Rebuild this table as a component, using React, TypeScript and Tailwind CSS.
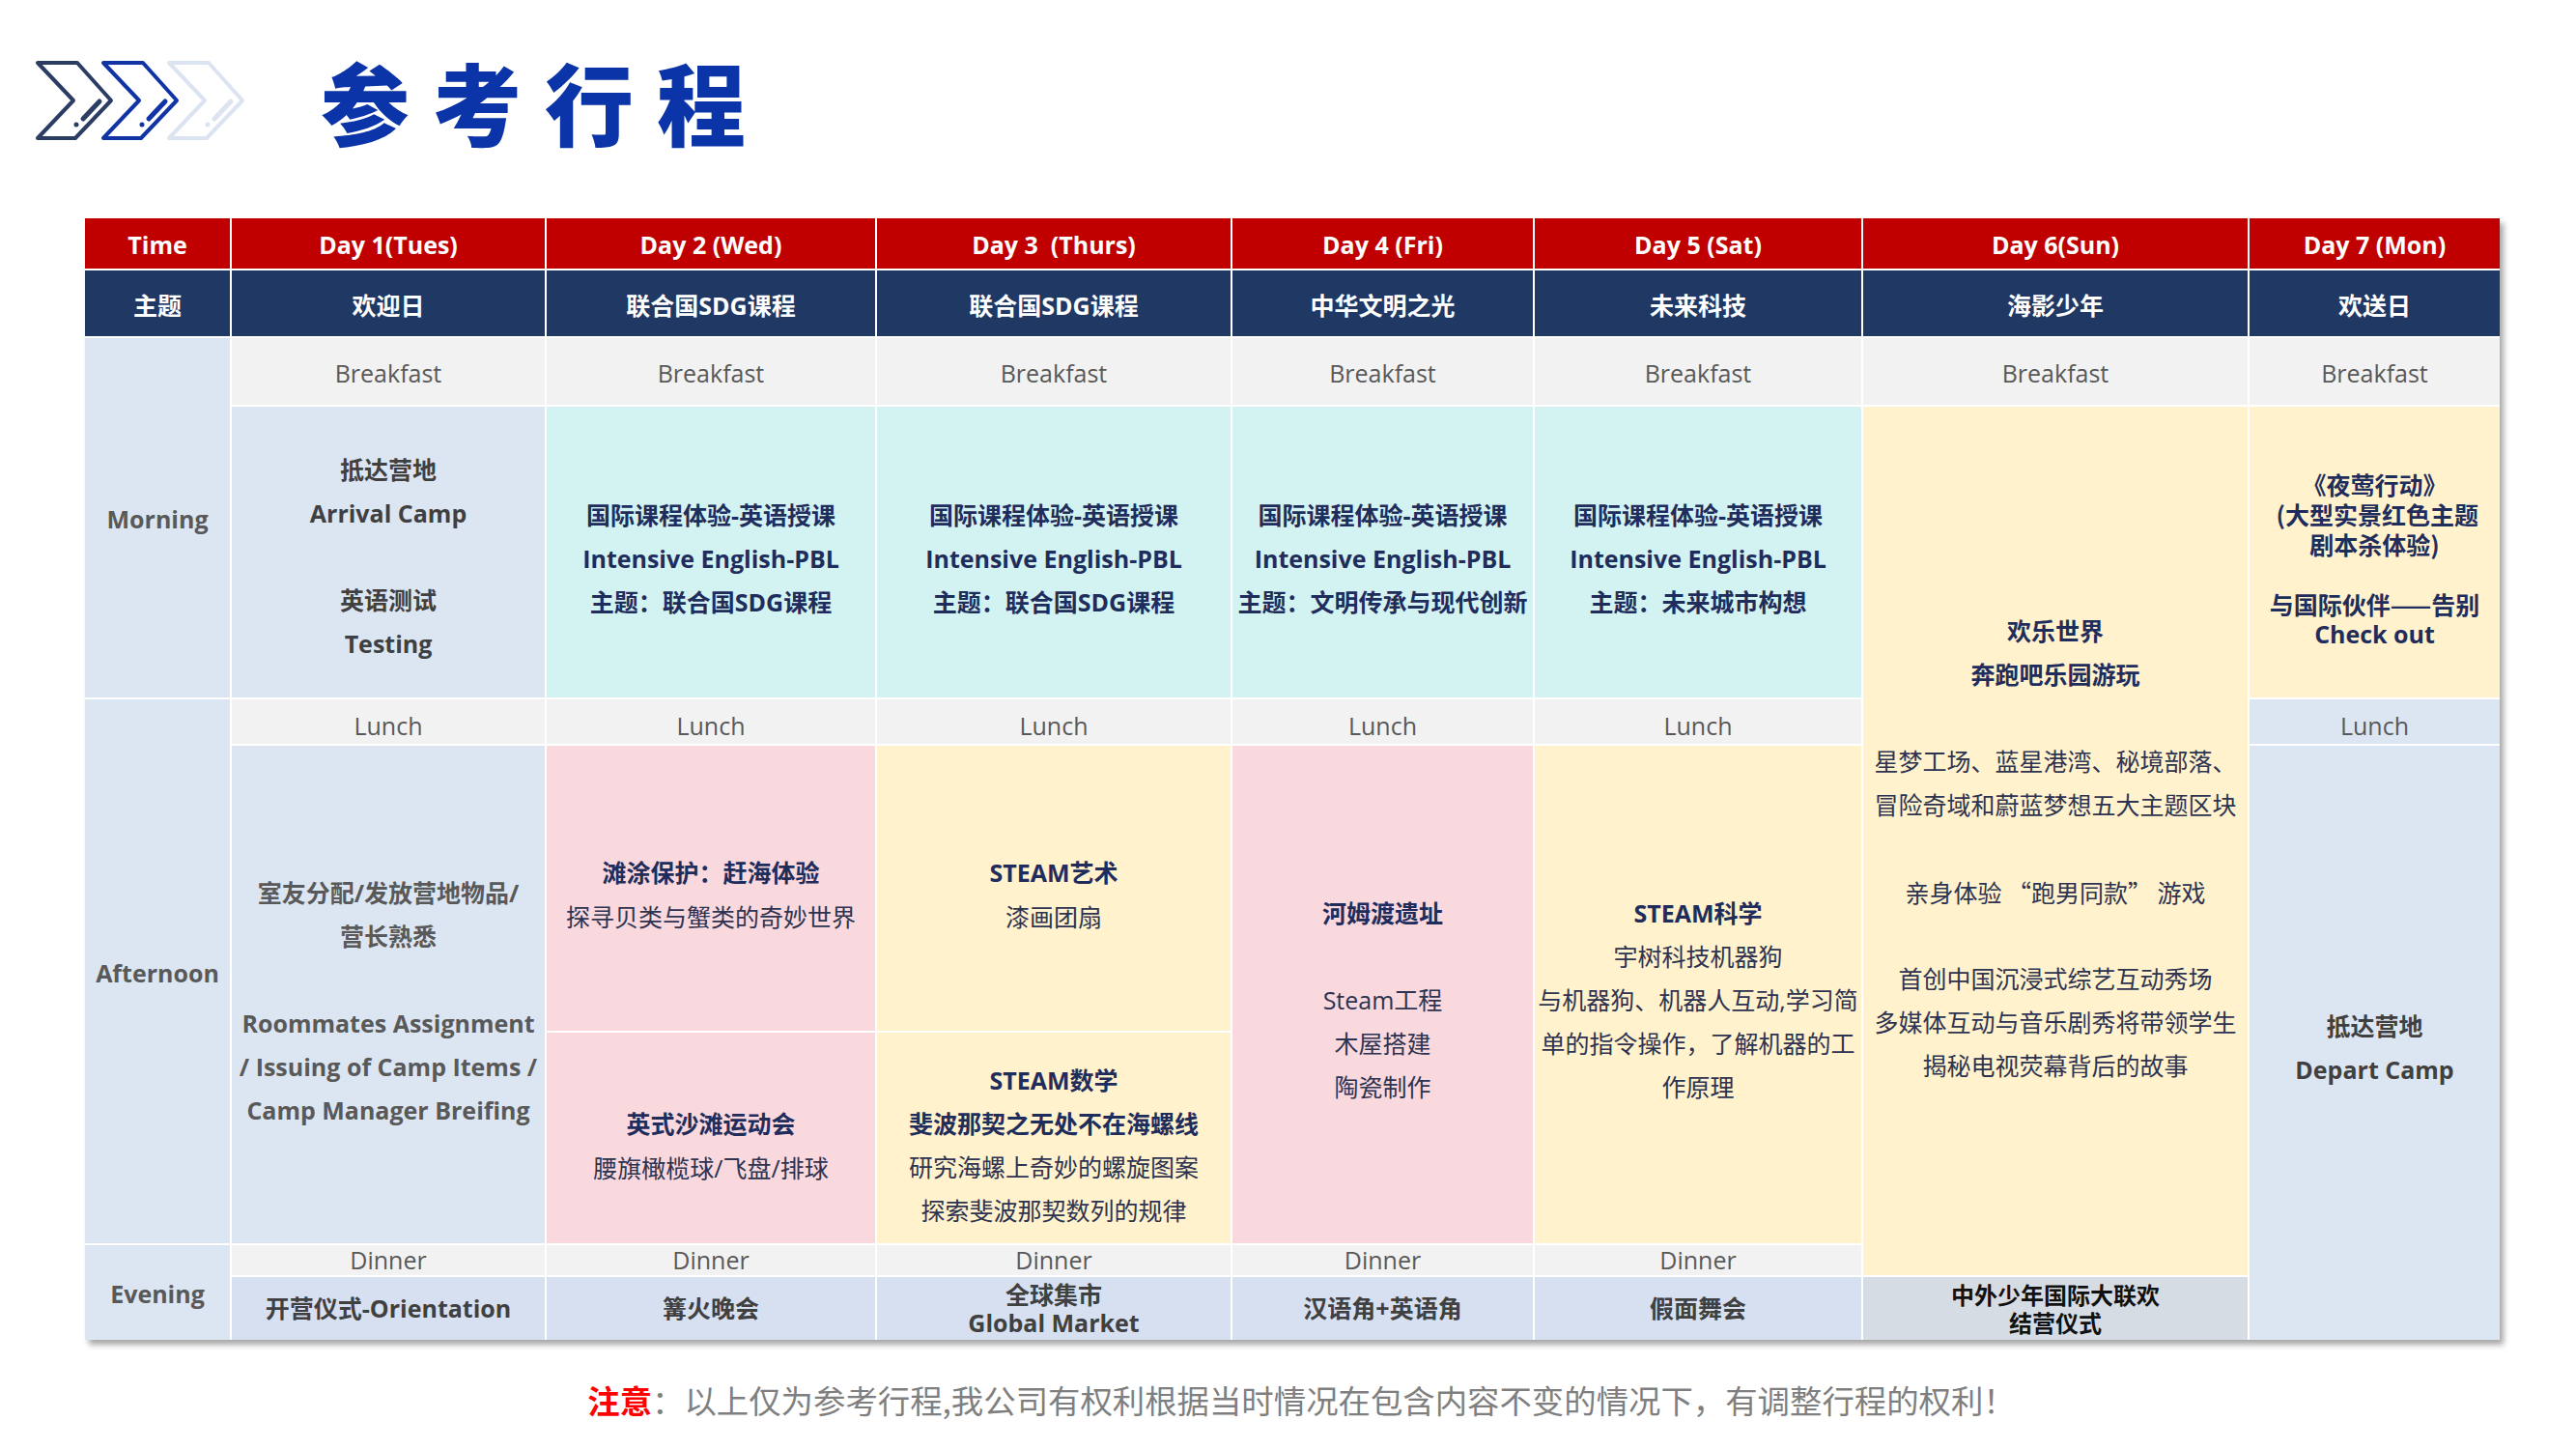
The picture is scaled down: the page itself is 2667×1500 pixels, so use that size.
import React from "react";

const latin = "font-['Open_Sans','Noto_Sans_CJK_SC',sans-serif]";
const cjk = "font-['Noto_Sans_CJK_SC',sans-serif]";

function Chevrons() {
  const colors = ["#2b3d63", "#1034a6", "#dce4f2"];
  return (
    <svg width="222" height="84" viewBox="0 0 222 84" fill="none">
      {colors.map((c, i) => (
        <g key={c} transform={`translate(${i * 68} 0)`} stroke={c} strokeWidth="4" strokeLinejoin="round" strokeLinecap="round">
          <polygon points="3,3 44,3 79,42 42,81 3,81 40,42" />
          <line x1="67" y1="43" x2="50" y2="61" strokeWidth="5" />
          <circle cx="43" cy="67" r="1.5" fill={c} strokeWidth="2" />
        </g>
      ))}
    </svg>
  );
}

function Lines({ lines, className = "" }: { lines: string[]; className?: string }) {
  return (
    <>
      {lines.map((l, i) => (
        <div key={i} className={`whitespace-pre ${className}`}>
          {l === "" ? "\u00a0" : l}
        </div>
      ))}
    </>
  );
}

const cell = "flex flex-col items-center justify-center text-center";
const red = `${cell} bg-[#c00000] text-white font-bold text-[25px] pt-[4px]`;
const navy = `${cell} bg-[#1f3864] text-white font-bold text-[25px] pt-[6px]`;
const meal = `${cell} bg-[#f2f2f2] text-[#595959] text-[25px]`;
const blue = "bg-[#dce6f2]";
const cyan = "bg-[#d3f3f2]";
const pink = "bg-[#f9d8de]";
const yellow = "bg-[#fff2cc]";
const eve = `${cell} bg-[#d6e0f1] text-[#404040] font-bold text-[25px]`;
const bold = "font-bold text-[#1f2d5c]";
const plain = "text-[#2d3350]";

export default function App() {
  return (
    <div className={`w-[2667px] h-[1500px] bg-white ${latin}`}>
      <div className="flex items-center h-[208px] pl-[36px]">
        <Chevrons />
        <h1 className={`ml-[74px] text-[92px] leading-none font-black tracking-[24px] text-[#0a34a8] ${cjk}`}>参考行程</h1>
      </div>

      <div className="ml-[88px] mt-[18px] w-[2500px] shadow-[4px_5px_6px_rgba(0,0,0,0.35)]">
        <div className="grid grid-cols-[150px_324px_340px_366px_311px_338px_398px_259px] grid-rows-[52px_68px_69px_301px_46px_295px_218px_31px_65px] gap-[2px] bg-white text-[25px]">
          {/* header */}
          <div className={`${red} col-start-1 row-start-1`}>Time</div>
          <div className={`${red} col-start-2 row-start-1`}>Day 1(Tues)</div>
          <div className={`${red} col-start-3 row-start-1`}>Day 2 (Wed)</div>
          <div className={`${red} col-start-4 row-start-1 whitespace-pre`}>Day 3  (Thurs)</div>
          <div className={`${red} col-start-5 row-start-1`}>Day 4 (Fri)</div>
          <div className={`${red} col-start-6 row-start-1`}>Day 5 (Sat)</div>
          <div className={`${red} col-start-7 row-start-1`}>Day 6(Sun)</div>
          <div className={`${red} col-start-8 row-start-1`}>Day 7 (Mon)</div>

          {/* themes */}
          <div className={`${navy} col-start-1 row-start-2`}>主题</div>
          <div className={`${navy} col-start-2 row-start-2`}>欢迎日</div>
          <div className={`${navy} col-start-3 row-start-2`}>联合国SDG课程</div>
          <div className={`${navy} col-start-4 row-start-2`}>联合国SDG课程</div>
          <div className={`${navy} col-start-5 row-start-2`}>中华文明之光</div>
          <div className={`${navy} col-start-6 row-start-2`}>未来科技</div>
          <div className={`${navy} col-start-7 row-start-2`}>海影少年</div>
          <div className={`${navy} col-start-8 row-start-2`}>欢送日</div>

          {/* time column */}
          <div className={`${cell} ${blue} col-start-1 row-start-3 row-span-2 font-bold text-[#595959] pt-[4px]`}>Morning</div>
          <div className={`${cell} ${blue} col-start-1 row-start-5 row-span-3 font-bold text-[#595959] pt-[4px]`}>Afternoon</div>
          <div className={`${cell} ${blue} col-start-1 row-start-8 row-span-2 font-bold text-[#595959] pt-[3px]`}>Evening</div>

          {/* breakfast */}
          <div className={`${meal} pt-[4px] col-start-2 row-start-3`}>Breakfast</div>
          <div className={`${meal} pt-[4px] col-start-3 row-start-3`}>Breakfast</div>
          <div className={`${meal} pt-[4px] col-start-4 row-start-3`}>Breakfast</div>
          <div className={`${meal} pt-[4px] col-start-5 row-start-3`}>Breakfast</div>
          <div className={`${meal} pt-[4px] col-start-6 row-start-3`}>Breakfast</div>
          <div className={`${meal} pt-[4px] col-start-7 row-start-3`}>Breakfast</div>
          <div className={`${meal} pt-[4px] col-start-8 row-start-3`}>Breakfast</div>

          {/* morning */}
          <div className={`${cell} ${blue} col-start-2 row-start-4 leading-[45px] font-bold text-[#404040] pt-[10px]`}>
            <Lines lines={["抵达营地", "Arrival Camp", "", "英语测试", "Testing"]} />
          </div>
          <div className={`${cell} ${cyan} col-start-3 row-start-4 leading-[45px] ${bold} pt-[14px]`}>
            <Lines lines={["国际课程体验-英语授课", "Intensive English-PBL", "主题：联合国SDG课程"]} />
          </div>
          <div className={`${cell} ${cyan} col-start-4 row-start-4 leading-[45px] ${bold} pt-[14px]`}>
            <Lines lines={["国际课程体验-英语授课", "Intensive English-PBL", "主题：联合国SDG课程"]} />
          </div>
          <div className={`${cell} ${cyan} col-start-5 row-start-4 leading-[45px] ${bold} pt-[14px]`}>
            <Lines lines={["国际课程体验-英语授课", "Intensive English-PBL", "主题：文明传承与现代创新"]} />
          </div>
          <div className={`${cell} ${cyan} col-start-6 row-start-4 leading-[45px] ${bold} pt-[14px]`}>
            <Lines lines={["国际课程体验-英语授课", "Intensive English-PBL", "主题：未来城市构想"]} />
          </div>
          <div className={`${cell} ${yellow} col-start-8 row-start-4 leading-[31px] ${bold} pt-[14px]`}>
            <Lines className={cjk} lines={["《夜莺行动》", " (大型实景红色主题", "剧本杀体验)", "", "与国际伙伴——告别"]} />
            <div>Check out</div>
          </div>

          {/* day 6 big cell */}
          <div className={`${cell} ${yellow} col-start-7 row-start-4 row-span-5 leading-[45px] text-[25px] pt-[16px]`}>
            <Lines className={bold} lines={["欢乐世界", "奔跑吧乐园游玩"]} />
            <Lines className={plain} lines={["", "星梦工场、蓝星港湾、秘境部落、", "冒险奇域和蔚蓝梦想五大主题区块", ""]} />
            <div className={`${plain} ${cjk} whitespace-pre`}>亲身体验 “跑男同款” 游戏</div>
            <Lines className={plain} lines={["", "首创中国沉浸式综艺互动秀场", "多媒体互动与音乐剧秀将带领学生", "揭秘电视荧幕背后的故事"]} />
          </div>

          {/* lunch */}
          <div className={`${meal} pt-[10px] col-start-2 row-start-5`}>Lunch</div>
          <div className={`${meal} pt-[10px] col-start-3 row-start-5`}>Lunch</div>
          <div className={`${meal} pt-[10px] col-start-4 row-start-5`}>Lunch</div>
          <div className={`${meal} pt-[10px] col-start-5 row-start-5`}>Lunch</div>
          <div className={`${meal} pt-[10px] col-start-6 row-start-5`}>Lunch</div>
          <div className={`${cell} ${blue} text-[#595959] pt-[10px] col-start-8 row-start-5`}>Lunch</div>

          {/* afternoon */}
          <div className={`${cell} ${blue} col-start-2 row-start-6 row-span-2 leading-[45px] font-bold text-[#595959] pt-[14px]`}>
            <Lines lines={["室友分配/发放营地物品/", "营长熟悉", "", "Roommates Assignment", "/ Issuing of Camp Items /", "Camp Manager Breifing"]} />
          </div>
          <div className={`${cell} ${pink} col-start-3 row-start-6 leading-[46px] pt-[12px]`}>
            <Lines className={bold} lines={["滩涂保护：赶海体验"]} />
            <Lines className={plain} lines={["探寻贝类与蟹类的奇妙世界"]} />
          </div>
          <div className={`${cell} ${pink} col-start-3 row-start-7 leading-[46px] pt-[16px]`}>
            <Lines className={bold} lines={["英式沙滩运动会"]} />
            <Lines className={plain} lines={["腰旗橄榄球/飞盘/排球"]} />
          </div>
          <div className={`${cell} ${yellow} col-start-4 row-start-6 leading-[46px] pt-[12px]`}>
            <Lines className={bold} lines={["STEAM艺术"]} />
            <Lines className={plain} lines={["漆画团扇"]} />
          </div>
          <div className={`${cell} ${yellow} col-start-4 row-start-7 leading-[45px] pt-[16px]`}>
            <Lines className={bold} lines={["STEAM数学", "斐波那契之无处不在海螺线"]} />
            <Lines className={plain} lines={["研究海螺上奇妙的螺旋图案", "探索斐波那契数列的规律"]} />
          </div>
          <div className={`${cell} ${pink} col-start-5 row-start-6 row-span-2 leading-[45px] pt-[12px]`}>
            <Lines className={bold} lines={["河姆渡遗址"]} />
            <Lines className={plain} lines={["", "Steam工程", "木屋搭建", "陶瓷制作"]} />
          </div>
          <div className={`${cell} ${yellow} col-start-6 row-start-6 row-span-2 leading-[45px] pt-[12px]`}>
            <Lines className={bold} lines={["STEAM科学"]} />
            <Lines className={plain} lines={["宇树科技机器狗", "与机器狗、机器人互动,学习简", "单的指令操作，了解机器的工", "作原理"]} />
          </div>
          <div className={`${cell} ${blue} col-start-8 row-start-6 row-span-4 leading-[45px] font-bold text-[#404040] pt-[10px]`}>
            <Lines lines={["抵达营地", "Depart Camp"]} />
          </div>

          {/* dinner */}
          <div className={`${meal} col-start-2 row-start-8`}>Dinner</div>
          <div className={`${meal} col-start-3 row-start-8`}>Dinner</div>
          <div className={`${meal} col-start-4 row-start-8`}>Dinner</div>
          <div className={`${meal} col-start-5 row-start-8`}>Dinner</div>
          <div className={`${meal} col-start-6 row-start-8`}>Dinner</div>

          {/* evening */}
          <div className={`${eve} col-start-2 row-start-9`}>开营仪式-Orientation</div>
          <div className={`${eve} col-start-3 row-start-9`}>篝火晚会</div>
          <div className={`${eve} col-start-4 row-start-9 leading-[29px] text-[24px]`}>
            <Lines lines={["全球集市", "Global Market"]} />
          </div>
          <div className={`${eve} col-start-5 row-start-9`}>汉语角+英语角</div>
          <div className={`${eve} col-start-6 row-start-9`}>假面舞会</div>
          <div className={`${cell} bg-[#d6dce4] text-[#111111] font-bold text-[24px] leading-[29px] col-start-7 row-start-9`}>
            <Lines lines={["中外少年国际大联欢", "结营仪式"]} />
          </div>
        </div>
      </div>

      <div className={`mt-[38px] flex justify-center pl-[28px] text-[33.4px] leading-[48px] text-[#7f7f7f] ${cjk}`}>
        <span className="font-bold text-[#ff0000]">注意</span>
        <span>：以上仅为参考行程,我公司有权利根据当时情况在包含内容不变的情况下，有调整行程的权利！</span>
      </div>
    </div>
  );
}
